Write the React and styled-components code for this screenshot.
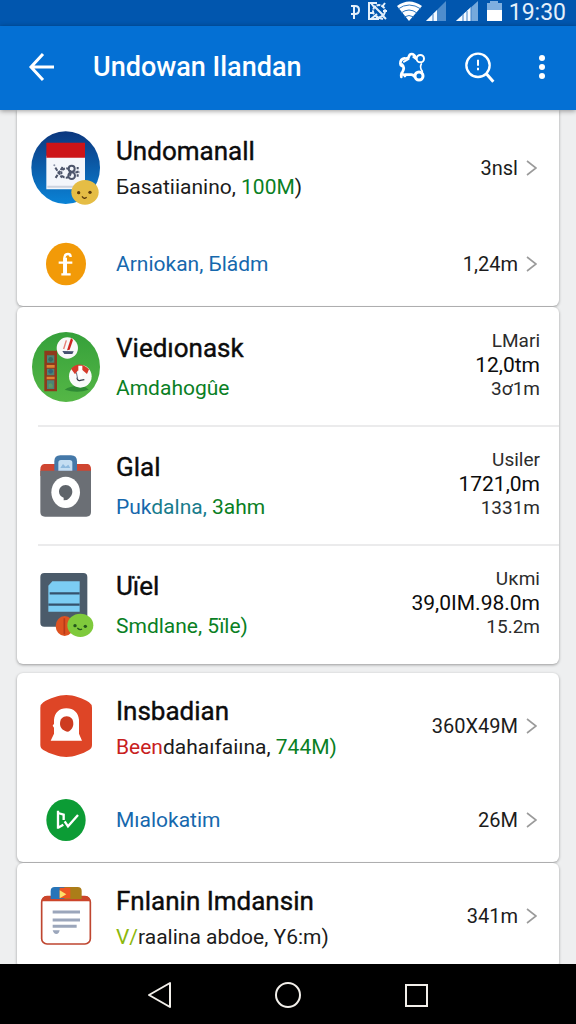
import React from "react";
import styled, { createGlobalStyle } from "styled-components";

const GlobalStyle = createGlobalStyle`
  *, *::before, *::after { box-sizing: border-box; }
  body {
    margin: 0;
    background: #eeeff0;
    font-family: Roboto, "Liberation Sans", sans-serif;
    color: #0c0c0c;
  }
`;

const tones = {
  ink: "#1c1c1c",
  green: "#0a7f24",
  blue: "#1668ad",
  teal: "#187c8c",
  red: "#c8201c",
  lime: "#8cb80c",
};

const Screen = styled.div`
  display: flex;
  flex-direction: column;
  height: 100vh;
`;

const StatusBar = styled.div`
  display: flex;
  align-items: center;
  justify-content: flex-end;
  height: 26px;
  flex: none;
  padding-right: 10px;
  background: #0156ae;
  color: #e4f0fb;
`;

const StatusIcons = styled.svg`
  display: block;
  width: 160px;
  height: 24px;
`;

const Clock = styled.time`
  width: 60px;
  font-size: 23px;
  line-height: 24px;
  text-align: right;
`;

const AppBar = styled.header`
  position: relative;
  z-index: 1;
  display: flex;
  align-items: center;
  height: 84px;
  flex: none;
  padding: 0 16px 2px 18px;
  background: #0470d4;
  color: #fff;
  box-shadow: 0 1px 5px rgba(0, 0, 0, 0.4);
`;

const BarTitle = styled.h1`
  flex: 1;
  margin: 0 0 0 27px;
  font-size: 27px;
  line-height: 32px;
  font-weight: 500;
  white-space: nowrap;
`;

const IconButton = styled.button`
  display: flex;
  align-items: center;
  justify-content: center;
  width: ${(p) => p.$width || 48}px;
  height: 48px;
  padding: 0;
  border: 0;
  background: none;
  color: inherit;
  cursor: pointer;
`;

const Actions = styled.div`
  display: flex;
  gap: 20px;
`;

const List = styled.main`
  flex: 1;
  min-height: 0;
  overflow-y: auto;
  scrollbar-width: none;
  padding: 0 17px;
`;

const Card = styled.section`
  margin-bottom: ${(p) => (p.$spaced ? 9 : 1)}px;
  overflow: hidden;
  border-radius: ${(p) => (p.$flush ? "0 0 6px 6px" : "6px")};
  background: #fff;
  box-shadow: 0 1px 3px rgba(0, 0, 0, 0.36);
`;

const rowHeights = { lead: 112, main: 105, sub: 84, detail: 119 };

const Row = styled.a`
  position: relative;
  display: flex;
  align-items: center;
  min-height: ${(p) => rowHeights[p.$kind]}px;
  padding: ${(p) => (p.$kind === "lead" ? 4 : 0)}px 19px 0 14px;
  color: inherit;
  text-decoration: none;

  & + &::before {
    content: "";
    position: absolute;
    top: -1px;
    right: 0;
    left: 21px;
    height: 2px;
    background: ${(p) => (p.$kind === "detail" ? "#ebebec" : "transparent")};
  }
`;

const IconSlot = styled.div`
  display: flex;
  justify-content: center;
  flex: none;
  width: 70px;
  margin-right: 15px;
`;

const Picture = styled.svg`
  display: block;
  flex: none;
`;

const Texts = styled.div`
  display: flex;
  flex-direction: column;
  flex: 1;
  min-width: 0;
  gap: ${(p) => (p.$kind === "detail" ? 4 : 0)}px;
  padding-top: ${(p) => ({ lead: 0, main: 5 }[p.$kind] || 0)}px;
  white-space: nowrap;
`;

const Title = styled.h2`
  margin: 0;
  font-size: 26px;
  line-height: 38px;
  font-weight: 400;
  -webkit-text-stroke: 0.4px currentColor;
`;

const Subtitle = styled.p`
  margin: 0;
  font-size: 21px;
  line-height: 34px;
`;

const Tone = styled.span`
  color: ${(p) => tones[p.$tone]};
`;

const Value = styled.span`
  margin-right: 8px;
  font-size: 20px;
  line-height: 26px;
  color: #1c1c1c;
`;

const Stack = styled.div`
  display: flex;
  flex-direction: column;
  padding-bottom: 4px;
  text-align: right;
  font-size: 19px;
  line-height: 24px;
  color: #2c2c2c;
`;

const Strong = styled.span`
  font-size: 21px;
  color: #0c0c0c;
`;

const NavBar = styled.nav`
  display: flex;
  align-items: center;
  justify-content: center;
  gap: 80px;
  height: 60px;
  flex: none;
  padding-top: 2px;
  background: #000;
  color: #f2efea;
`;

function Chevron() {
  return (
    <Picture width="14" height="18" viewBox="0 0 14 18" fill="none" stroke="#9b9b9b" strokeWidth="1.6" aria-hidden="true">
      <path d="M1 2l9 7-9 7" />
    </Picture>
  );
}

function CalendarIcon() {
  return (
    <Picture width="70" height="74" viewBox="95 62 210 222" aria-hidden="true">
      <defs>
        <linearGradient id="sky" x1="0" y1="0" x2="0" y2="1">
          <stop offset="0" stopColor="#0c377e" />
          <stop offset="1" stopColor="#0a83d6" />
        </linearGradient>
      </defs>
      <ellipse cx="199" cy="172" rx="103" ry="109" fill="url(#sky)" />
      <path d="M141 136h116v101H141z" fill="#f4f6fb" />
      <path d="M141 97h116v45H141z" fill="#cd1418" />
      <path d="M144 226h110v6H144z" fill="#cdd3df" />
      <g fill="none" stroke="#4d556b" strokeWidth="6">
        <path d="M168 172l20 30M190 170l-22 34" strokeDasharray="11 3" />
        <circle cx="200" cy="188" r="14" strokeDasharray="9 4" />
        <circle cx="217" cy="175" r="9" />
        <circle cx="217" cy="196" r="10" />
        <path d="M235 170v32M228 186h12" strokeDasharray="7 4" />
      </g>
      <circle cx="165" cy="165" r="3" fill="#8b93a8" />
      <ellipse cx="257" cy="246" rx="41" ry="37" fill="#e5bd45" />
      <g fill="#5a3a0c">
        <circle cx="238" cy="247" r="5" />
        <circle cx="272" cy="246" r="5" />
      </g>
      <path d="M248 258q7 10 14 3" fill="none" stroke="#5a3a0c" strokeWidth="4" />
    </Picture>
  );
}

function CoinIcon() {
  return (
    <Picture width="42" height="44" viewBox="135 395 126 132" aria-hidden="true">
      <ellipse cx="198" cy="461" rx="60" ry="64" fill="#f29a08" />
      <path d="M176 457h41M212 440q0-9-8-9-11 0-11 14v48M184 492h28" fill="none" stroke="#fff" strokeWidth="7" />
      <path d="M190 442h11v50h-11z" fill="#fff" />
    </Picture>
  );
}

function ParkIcon() {
  return (
    <Picture width="70" height="72" viewBox="94 92 210 216" aria-hidden="true">
      <defs>
        <linearGradient id="grass" x1="0" y1="0" x2="0" y2="1">
          <stop offset="0" stopColor="#35a03a" />
          <stop offset="1" stopColor="#55b746" />
        </linearGradient>
      </defs>
      <ellipse cx="199" cy="200" rx="102" ry="105" fill="url(#grass)" />
      <path d="M195 268q24-16 62-8l10 8q-34 12-72 0z" fill="#2f8a35" />
      <path d="M134 151h38v122h-38z" fill="#8e3a1c" />
      <path d="M141 194h24v8h-24zM141 229h24v8h-24z" fill="#dd8533" />
      <path d="M142 165h22v22h-22zM142 205h22v20h-22zM142 240h22v26h-22z" fill="#4b8576" />
      <circle cx="153" cy="177" r="7" fill="#336a62" />
      <circle cx="153" cy="213" r="7" fill="#33627a" />
      <path d="M147 252q7-8 12 2v8h-12z" fill="#5c9a64" />
      <circle cx="203" cy="143" r="32" fill="#f8f8f8" />
      <path d="M214 113l-12 37 8-2 10-29z" fill="#cf2520" />
      <path d="M200 120l-8 26" stroke="#e67c74" strokeWidth="4" />
      <path d="M188 152l34 1-4 8h-24z" fill="#44506e" />
      <circle cx="242" cy="228" r="34" fill="#fafafa" />
      <path d="M214 205q26-26 54 2l-6 14-14-12-14 2-8 11z" fill="#d63a2a" />
      <path d="M236 196h12v36h-12z" fill="#fff" />
      <path d="M232 232q2 12 10 8l12-2" fill="none" stroke="#333a4a" strokeWidth="4" />
      <path d="M230 216l4 20" stroke="#6d7486" strokeWidth="3" />
    </Picture>
  );
}

function BagIcon() {
  return (
    <Picture width="54" height="64" viewBox="116 453 162 192" aria-hidden="true">
      <path d="M132 483h130q10 2 10 16v20H120v-20q0-14 12-16z" fill="#cf4530" />
      <path d="M120 503h152v124q0 14-14 14H134q-14 0-14-14z" fill="#6b6f75" />
      <path d="M162 503v-28q0-18 18-18h32q18 0 18 18v28z" fill="#4478a8" />
      <path d="M174 503v-24q0-8 8-8h26q8 0 8 8v24z" fill="#c4def2" />
      <path d="M180 495l8-12 8 8 8-6 6 10z" fill="#8db9dd" />
      <ellipse cx="196" cy="568" rx="43" ry="47" fill="#fff" />
      <path d="M196 546c-12 0-20 9-20 20 0 9 6 15 14 18v8l10-1c8-6 16-14 16-25 0-11-8-20-20-20z" fill="#5f646a" />
    </Picture>
  );
}

function CardsIcon() {
  return (
    <Picture width="56" height="68" viewBox="115 98 168 204" aria-hidden="true">
      <rect x="122" y="104" width="141" height="161" rx="12" fill="#4b5b6a" />
      <path d="M158 129h82v91h-94v-78z" fill="#7ccdf3" />
      <path d="M150 165h90M146 199h94" stroke="#35526c" strokeWidth="7" />
      <ellipse cx="195" cy="263" rx="27" ry="30" fill="#dd5220" />
      <path d="M194 240v48" stroke="#b83a18" strokeWidth="5" />
      <ellipse cx="242" cy="261" rx="39" ry="35" fill="#7fca3c" />
      <circle cx="226" cy="262" r="5" fill="#24571c" />
      <circle cx="257" cy="264" r="5" fill="#24571c" />
      <path d="M233 269q8 8 14 3" fill="none" stroke="#24571c" strokeWidth="4" />
    </Picture>
  );
}

function HelmetIcon() {
  return (
    <Picture width="54" height="64" viewBox="114 76 162 192" aria-hidden="true">
      <path d="M196 79c22 0 50 10 68 22q9 6 9 16v112q0 10-9 15c-18 11-46 21-68 21s-50-10-69-21q-9-5-9-15V117q0-10 9-16c18-12 47-22 69-22z" fill="#de4526" />
      <path d="M196 119c23 0 36 14 38 34v42l9 21H149l10-21v-18l-4-6 4-6v-12c2-20 15-34 37-34z" fill="#fff" />
      <path d="M197 143c12 0 20 9 20 22 0 11-7 20-16 24-14-2-24-11-24-24s8-22 20-22z" fill="#cd3b20" />
    </Picture>
  );
}

function CheckIcon() {
  return (
    <Picture width="42" height="44" viewBox="134 379 126 132" aria-hidden="true">
      <ellipse cx="197" cy="445" rx="59" ry="63" fill="#0c9c35" />
      <path d="M173 417v54M173 424l17 5v16M173 468l16-9M193 449l10 15 30-34" fill="none" stroke="#fff" strokeWidth="7" />
    </Picture>
  );
}

function ClipboardIcon() {
  return (
    <Picture width="54" height="62" viewBox="114 96 162 186" aria-hidden="true">
      <rect x="122" y="131" width="146" height="142" rx="16" fill="#fff" stroke="#bf4630" strokeWidth="5" />
      <path d="M122 145q0-14 14-16h118q14 2 14 16z" fill="#cc452a" />
      <path d="M149 138v-24q0-12 12-12h34v36z" fill="#2674b8" />
      <path d="M190 102h40q12 0 12 12v24h-52z" fill="#ab7d18" />
      <path d="M176 104h32v32h-32z" fill="#ee5523" />
      <path d="M176 112l20 12-20 12z" fill="#ffe06a" />
      <path d="M155 177h82M155 201h82M155 220h72" stroke="#9ba6bb" strokeWidth="9" />
      <path d="M155 232h21q-2 11-10 11t-11-11z" fill="#9ba6bb" />
    </Picture>
  );
}

function StatusGlyphs() {
  return (
    <StatusIcons viewBox="346 0 160 24" aria-hidden="true">
      <g fill="none" stroke="#e4f0fb" strokeWidth="2">
        <path d="M354 4v14M351 5h4q4 0 4 4t-4 4h-4" />
        <path d="M377 2h-8v16h10M371 2l3 4M369 12h5M376 16l7 2M371 18l6-5" />
        <circle cx="379" cy="10" r="6" strokeDasharray="4 1" />
        <path d="M374 5l10 10M385 2l-3 4M387 10h-4M386 18l-4-4" />
      </g>
      <path d="M409 20L397 5q12-9 25 0z" fill="#fff" />
      <path d="M398 8q11-8 23 0M401 12q8-6 16 0M404 16q5-3 10 0" fill="none" stroke="#2d76bf" strokeWidth="1" />
      <path d="M426 20L446 0v20z" fill="#4f8dcd" />
      <path d="M426 20l11-11v11z" fill="#f4f9ff" />
      <path d="M456 20L478 0v20z" fill="#76a9dc" />
      <path d="M456 20l15-14v14z" fill="#f4f9ff" />
      <path d="M433 13v7M463 13v7M467 10v10M471 6v14" stroke="#3c7fc5" strokeWidth="1" />
      <path d="M487 2h3V0h8v2h4v18h-15z" fill="#7fafe0" />
      <path d="M487 9h15v11h-15z" fill="#fff" />
    </StatusIcons>
  );
}

const groups = [
  {
    flush: true,
    rows: [
      { kind: "lead", icon: CalendarIcon, title: "Undomanall", text: [["ink", "Бasatiianino, "], ["green", "100M"], ["ink", ")"]], value: "3nsl" },
      { kind: "sub", icon: CoinIcon, text: [["blue", "Arniokan, Бládm"]], value: "1,24m" },
    ],
  },
  {
    spaced: true,
    rows: [
      { kind: "detail", icon: ParkIcon, title: "Viedıonask", text: [["green", "Amdahogûe"]], stack: ["LMari", "12,0tm", "3ơ1m"] },
      { kind: "detail", icon: BagIcon, title: "Glal", text: [["blue", "Puk"], ["teal", "dalna, "], ["green", "3ahm"]], stack: ["Usiler", "1721,0m", "1331m"] },
      { kind: "detail", icon: CardsIcon, title: "Uïel", text: [["green", "Smdlane, 5ïle)"]], stack: ["Uĸmi", "39,0IM.98.0m", "15.2m"] },
    ],
  },
  {
    rows: [
      { kind: "main", icon: HelmetIcon, title: "Insbadian", text: [["red", "Been"], ["ink", "dahaıfaiına, "], ["green", "744M)"]], value: "360X49M" },
      { kind: "sub", icon: CheckIcon, text: [["blue", "Mıalokatim"]], value: "26M" },
    ],
  },
  {
    rows: [
      { kind: "main", icon: ClipboardIcon, title: "Fnlanin Imdansin", text: [["lime", "V/"], ["ink", "raalina abdoe, Y6:m)"]], value: "341m" },
    ],
  },
];

function Entry({ kind, icon: Icon, title, text, value, stack }) {
  return (
    <Row href="#" $kind={kind}>
      <IconSlot><Icon /></IconSlot>
      <Texts $kind={kind}>
        {title && <Title>{title}</Title>}
        <Subtitle>
          {text.map(([tone, words]) => <Tone key={words} $tone={tone}>{words}</Tone>)}
        </Subtitle>
      </Texts>
      {stack ? (
        <Stack>
          <span>{stack[0]}</span>
          <Strong>{stack[1]}</Strong>
          <span>{stack[2]}</span>
        </Stack>
      ) : (
        <>
          <Value>{value}</Value>
          <Chevron />
        </>
      )}
    </Row>
  );
}

export default function App() {
  return (
    <Screen>
      <GlobalStyle />
      <StatusBar>
        <StatusGlyphs />
        <Clock>19:30</Clock>
      </StatusBar>
      <AppBar>
        <IconButton aria-label="Back">
          <svg width="28" height="30" viewBox="0 0 28 30" fill="none" stroke="currentColor" strokeWidth="3">
            <path d="M15 2L3 15l12 13M3 15h23" />
          </svg>
        </IconButton>
        <BarTitle>Undowan Ilandan</BarTitle>
        <Actions>
          <IconButton aria-label="Sync">
            <svg width="30" height="32" viewBox="291 150 90 96" fill="none" stroke="currentColor" strokeWidth="8" strokeLinejoin="round" strokeLinecap="round">
              <path d="M347 170q-4-11-12-11-7 0-9 10-5 5-13 3-12 2-12 16 0 5 5 7" />
              <path d="M306 190q9 9 2 22-6 6-4 16M306 221q4-3 9 4M316 221h18q5 0 10 6" />
              <path d="M364 189q-6 10 3 22" strokeWidth="5" />
              <path d="M312 182l14-8M340 168l8 6" strokeWidth="6" />
              <circle cx="361" cy="173" r="11" strokeWidth="6" />
              <circle cx="357" cy="225" r="12" strokeWidth="9" />
            </svg>
          </IconButton>
          <IconButton aria-label="Search">
            <svg width="32" height="32" viewBox="492 150 96 96" fill="none" stroke="currentColor" strokeWidth="7">
              <circle cx="534" cy="193" r="35" />
              <path d="M559 218l21 24" strokeWidth="9" />
              <path d="M534 176v18M534 200v8" strokeWidth="6" />
            </svg>
          </IconButton>
          <IconButton $width={36} aria-label="More">
            <svg width="8" height="28" viewBox="0 0 8 28" fill="currentColor">
              <circle cx="4" cy="5" r="3" />
              <circle cx="4" cy="14" r="3" />
              <circle cx="4" cy="23" r="3" />
            </svg>
          </IconButton>
        </Actions>
      </AppBar>
      <List>
        {groups.map((group, i) => (
          <Card key={i} $flush={group.flush} $spaced={group.spaced}>
            {group.rows.map((row) => <Entry key={row.text[0][1]} {...row} />)}
          </Card>
        ))}
      </List>
      <NavBar>
        <IconButton aria-label="Back">
          <svg width="28" height="30" viewBox="0 0 28 30" fill="none" stroke="currentColor" strokeWidth="2">
            <path d="M24 3v24L3 15z" strokeLinejoin="round" />
          </svg>
        </IconButton>
        <IconButton aria-label="Home">
          <svg width="28" height="28" viewBox="0 0 28 28" fill="none" stroke="currentColor" strokeWidth="2">
            <circle cx="14" cy="14" r="12" />
          </svg>
        </IconButton>
        <IconButton aria-label="Recent">
          <svg width="28" height="28" viewBox="0 0 28 28" fill="none" stroke="currentColor" strokeWidth="2">
            <path d="M4 4h21v21H4z" />
          </svg>
        </IconButton>
      </NavBar>
    </Screen>
  );
}
